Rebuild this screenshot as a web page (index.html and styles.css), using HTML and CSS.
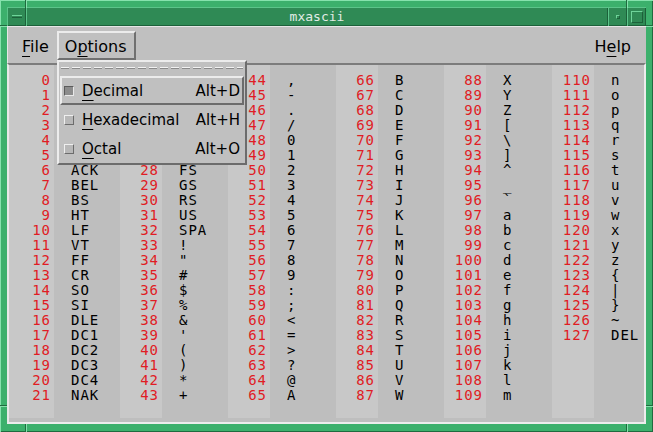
FILE: index.html
```html
<!DOCTYPE html>
<html>
<head>
<meta charset="utf-8">
<link rel="stylesheet" href="styles.css">
</head>
<body>
<div class="window">
  <span class="notch nv" style="left:25px;top:0"></span>
  <span class="notch nv" style="left:626px;top:0"></span>
  <span class="notch nv" style="left:25px;top:424px"></span>
  <span class="notch nv" style="left:626px;top:424px"></span>
  <span class="notch nh" style="left:0;top:25px"></span>
  <span class="notch nh" style="left:646px;top:25px"></span>
  <span class="notch nh" style="left:0;top:405px"></span>
  <span class="notch nh" style="left:646px;top:405px"></span>

  <div class="titlebar">
    <div class="wbtn"><span class="wbar"></span></div>
    <div class="title">mxascii</div>
    <div class="wbtn"><span class="wdot"></span></div>
    <div class="wbtn"><span class="wsq"></span></div>
  </div>

  <div class="client">
    <div class="menubar">
      <span class="mitem"><span class="mn">F</span>ile</span>
      <span class="mitem active">O<span class="mn">p</span>tions</span>
      <span class="mspacer"></span>
      <span class="mitem">H<span class="mn">e</span>lp</span>
    </div>

    <div class="content">
      <div class="strip first">0
1
2
3
4
5
6
7
8
9
10
11
12
13
14
15
16
17
18
19
20
21</div>
      <div class="chars">NUL
SOH
STX
ETX
EOT
ENQ
ACK
BEL
BS
HT
LF
VT
FF
CR
SO
SI
DLE
DC1
DC2
DC3
DC4
NAK</div>
      <div class="strip">22
23
24
25
26
27
28
29
30
31
32
33
34
35
36
37
38
39
40
41
42
43</div>
      <div class="chars">SYN
ETB
CAN
EM
SUB
ESC
FS
GS
RS
US
SPA
!
&quot;
#
$
%
&amp;
'
(
)
*
+</div>
      <div class="strip">44
45
46
47
48
49
50
51
52
53
54
55
56
57
58
59
60
61
62
63
64
65</div>
      <div class="chars">,
-
.
/
0
1
2
3
4
5
6
7
8
9
:
;
&lt;
=
&gt;
?
@
A</div>
      <div class="strip">66
67
68
69
70
71
72
73
74
75
76
77
78
79
80
81
82
83
84
85
86
87</div>
      <div class="chars">B
C
D
E
F
G
H
I
J
K
L
M
N
O
P
Q
R
S
T
U
V
W</div>
      <div class="strip">88
89
90
91
92
93
94
95
96
97
98
99
100
101
102
103
104
105
106
107
108
109</div>
      <div class="chars">X
Y
Z
[
\
]
^
_
`
a
b
c
d
e
f
g
h
i
j
k
l
m</div>
      <div class="strip">110
111
112
113
114
115
116
117
118
119
120
121
122
123
124
125
126
127</div>
      <div class="chars">n
o
p
q
r
s
t
u
v
w
x
y
z
{
|
}
~
DEL</div>
    </div>
  </div>

  <div class="popup">
    <div class="tearoff"><span class="dash"></span></div>
    <div class="pitem active"><span class="toggle on"></span><span class="plabel"><span class="mn">D</span>ecimal</span><span class="accel">Alt+D</span></div>
    <div class="pitem"><span class="toggle"></span><span class="plabel"><span class="mn">H</span>exadecimal</span><span class="accel">Alt+H</span></div>
    <div class="pitem"><span class="toggle"></span><span class="plabel"><span class="mn">O</span>ctal</span><span class="accel">Alt+O</span></div>
  </div>
</div>
</body>
</html>
```

FILE: styles.css
```css
* { box-sizing: border-box; }
html, body { margin: 0; padding: 0; }
body {
  width: 653px;
  height: 432px;
  overflow: hidden;
  background: #3cb371;
  font-family: "DejaVu Sans", sans-serif;
}
.window {
  position: relative;
  width: 653px;
  height: 432px;
  display: flex;
  flex-direction: column;
  padding: 7px 7px 8px 7px;
  background: #3cb06c;
  box-shadow: inset 1px 1px 0 #86e2ad, inset -1px -1px 0 #1f6b3f;
}
.notch { position: absolute; }
.notch.nv { width: 2px; height: 8px; border-left: 1px solid #1f6b3f; border-right: 1px solid #86e2ad; }
.notch.nh { width: 7px; height: 2px; border-top: 1px solid #1f6b3f; border-bottom: 1px solid #86e2ad; }

.titlebar {
  flex: none;
  height: 19px;
  display: flex;
  background: #2f8a55;
  box-shadow: inset 0 1px 0 #1f6b3f;
}
.wbtn {
  width: 19px;
  height: 19px;
  display: flex;
  align-items: center;
  justify-content: center;
  box-shadow: inset 1px 1px 0 #5cc48a, inset -1px -1px 0 #1c613a;
}
.wbar { width: 10px; height: 3px; border-top: 1px solid #6fd49a; border-bottom: 1px solid #1c613a; background: #2f8a55; }
.wdot { width: 4px; height: 4px; border-top: 1px solid #6fd49a; border-left: 1px solid #6fd49a; border-bottom: 1px solid #1c613a; border-right: 1px solid #1c613a; }
.wsq { width: 12px; height: 12px; border-top: 1px solid #6fd49a; border-left: 1px solid #6fd49a; border-bottom: 1px solid #1c613a; border-right: 1px solid #1c613a; }
.title {
  flex: 1;
  text-align: center;
  font-family: "DejaVu Sans Mono", monospace;
  font-size: 13px;
  line-height: 19px;
  color: #e2ece6;
  box-shadow: inset 1px 1px 0 #5cc48a, inset -1px -1px 0 #1c613a;
}

.client {
  flex: 1;
  display: flex;
  flex-direction: column;
  background: #c0c0c0;
  min-height: 0;
}
.menubar {
  flex: none;
  height: 37px;
  display: flex;
  align-items: flex-start;
  padding: 5px 7px 0 7px;
  background: #c0c0c0;
  box-shadow: inset 1px 1px 0 #e6e6e6;
  font-size: 16px;
  color: #000;
}
.mitem {
  height: 29px;
  line-height: 27px;
  padding: 0 6px;
  border: 2px solid transparent;
}
.mitem.active {
  padding: 0 7px 0 6px;
  border-color: #ececec #707070 #707070 #ececec;
}
.mspacer { flex: 1; }
.mn {
  text-decoration: underline;
  text-decoration-thickness: 1px;
  text-underline-offset: 4px;
}

.content {
  flex: 1;
  min-height: 0;
  display: grid;
  grid-template-columns: 45px 66px repeat(5, 42px 66px);
  overflow: hidden;
  border-top: 2px solid #7c7c7c;
  border-left: 2px solid #e8e8e8;
  border-right: 2px solid #ececec;
  border-bottom: 2px solid #ececec;
  background: #bebebe;
  padding-bottom: 4px;
  font-family: "DejaVu Sans Mono", monospace;
  font-size: 14px;
  line-height: 15px;
  letter-spacing: 1px;
}
.strip {
  white-space: pre;
  background: #c8c8c8;
  color: #e01c24;
  text-align: right;
  padding: 8px 3px 0 0;
}
.chars {
  white-space: pre;
  color: #000;
  padding: 8px 0 0 17px;
}

.popup {
  position: absolute;
  left: 57px;
  top: 60px;
  width: 190px;
  height: 105px;
  background: #c0c0c0;
  border: 2px solid;
  border-color: #ececec #6c6c6c #6c6c6c #ececec;
  padding: 0 1px;
  font-size: 15px;
  color: #000;
}
.tearoff {
  height: 14px;
  padding: 5px 1px 0 1px;
}
.dash {
  display: block;
  height: 2px;
  background:
    repeating-linear-gradient(90deg, #f2f2f2 0 8px, transparent 8px 11px) top / 100% 1px no-repeat,
    repeating-linear-gradient(90deg, #8a8a8a 0 8px, transparent 8px 11px) bottom / 100% 1px no-repeat;
}
.pitem {
  height: 29px;
  display: flex;
  align-items: center;
  padding: 0 2px;
  border: 2px solid transparent;
}
.pitem.active {
  border-color: #ececec #6c6c6c #6c6c6c #ececec;
}
.toggle {
  width: 10px;
  height: 10px;
  margin-right: 8px;
  background: #b8b8b8;
  border: 1px solid;
  border-color: #efefef #6c6c6c #6c6c6c #efefef;
}
.toggle.on {
  background: #8c8c8c;
  border-color: #5c5c5c #e8e8e8 #e8e8e8 #5c5c5c;
}
.plabel { flex: 1; }
```
